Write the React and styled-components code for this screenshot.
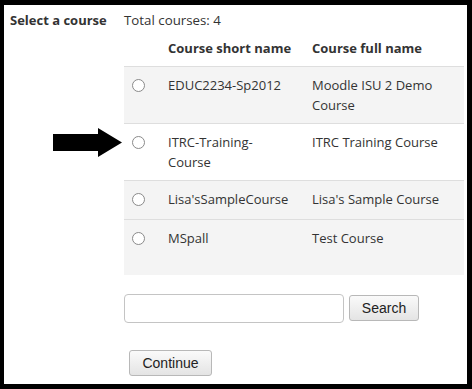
import React, { useState } from 'react'
import styled, { createGlobalStyle } from 'styled-components'

const courses = [
  { id: 1, short: 'EDUC2234-Sp2012', full: 'Moodle ISU 2 Demo Course', shade: true },
  { id: 2, short: 'ITRC-Training-Course', full: 'ITRC Training Course', shade: false },
  { id: 3, short: "Lisa'sSampleCourse", full: "Lisa's Sample Course", shade: true },
  { id: 4, short: 'MSpall', full: 'Test Course', shade: true, tall: true },
]

const App = () => {
  const [selected, setSelected] = useState(null)
  const [query, setQuery] = useState('')

  return (
    <>
      <Global />
      <Frame>
        <Arrow width="70" height="30" viewBox="0 0 70 30">
          <path d="M0 6 H45 V0 L69 14.5 L45 29 V23 H0 Z" fill="#000" />
        </Arrow>
        <Layout>
          <SideLabel>Select a course</SideLabel>
          <Main>
            <Caption>Total courses: 4</Caption>
            <Table>
              <thead>
                <tr>
                  <Th />
                  <Th>Course short name</Th>
                  <Th>Course full name</Th>
                </tr>
              </thead>
              <tbody>
                {courses.map((c) => (
                  <Row key={c.id} $shade={c.shade} $tall={c.tall}>
                    <RadioCell>
                      <Radio
                        type="radio"
                        name="course"
                        checked={selected === c.id}
                        onChange={() => setSelected(c.id)}
                      />
                    </RadioCell>
                    <ShortCell>{c.short}</ShortCell>
                    <Td>{c.full}</Td>
                  </Row>
                ))}
              </tbody>
            </Table>
            <SearchRow>
              <SearchInput value={query} onChange={(e) => setQuery(e.target.value)} />
              <Button $w={70}>Search</Button>
            </SearchRow>
            <ContinueRow>
              <Button $w={83}>Continue</Button>
            </ContinueRow>
          </Main>
        </Layout>
      </Frame>
    </>
  )
}

export default App

const Global = createGlobalStyle`
  body {
    margin: 0;
    background: #fff;
  }
`

const Frame = styled.div`
  position: relative;
  box-sizing: border-box;
  width: 472px;
  height: 389px;
  border-style: solid;
  border-color: #000;
  border-width: 5px 5px 5px 4px;
  background: #fff;
  padding-top: 5px;
  font-family: "Open Sans", "Noto Sans", sans-serif;
  font-size: 13px;
  color: #333;
  overflow: hidden;
`

const Arrow = styled.svg`
  position: absolute;
  left: 49px;
  top: 123px;
`

const Layout = styled.div`
  display: grid;
  grid-template-columns: 120px 340px;
`

const SideLabel = styled.div`
  padding-left: 6px;
  line-height: 20px;
  font-weight: bold;
  white-space: nowrap;
`

const Main = styled.div`
  display: flex;
  flex-direction: column;
`

const Caption = styled.div`
  line-height: 20px;
  font-size: 13.3px;
`

const Table = styled.table`
  width: 340px;
  border-collapse: collapse;
  table-layout: fixed;
`

const Th = styled.th`
  text-align: left;
  font-weight: bold;
  line-height: 20px;
  padding: 8px 0;
  white-space: nowrap;
  &:first-child { width: 44px; }
  &:nth-child(2) { width: 144px; }
`

const Row = styled.tr`
  background: ${(p) => (p.$shade ? '#f4f4f4' : '#fff')};
  border-top: 1px solid #dedede;
  height: ${(p) => (p.$tall ? '55px' : 'auto')};
`

const Td = styled.td`
  vertical-align: top;
  line-height: 20px;
  padding: 8px 0;
`

const RadioCell = styled(Td)`
  padding-left: 8px;
`

const ShortCell = styled(Td)`
  padding-right: 18px;
`

const Radio = styled.input`
  appearance: none;
  margin: 4px 0 0 0;
  width: 13px;
  height: 13px;
  border: 1px solid #8a8a8a;
  border-radius: 50%;
  background: #fff;
  box-sizing: border-box;
  &:checked {
    background: radial-gradient(circle, #333 35%, #fff 40%);
  }
`

const SearchRow = styled.div`
  display: flex;
  align-items: center;
  gap: 5px;
  margin-top: 19px;
`

const SearchInput = styled.input`
  box-sizing: border-box;
  width: 220px;
  height: 29px;
  border: 1px solid #c4c4c4;
  border-radius: 4px;
  padding: 4px 6px;
  font-size: 13px;
`

const ContinueRow = styled.div`
  display: flex;
  margin-top: 27px;
  padding-left: 5px;
`

const Button = styled.button`
  box-sizing: border-box;
  width: ${(p) => p.$w}px;
  height: 26px;
  border: 1px solid #b8b8b8;
  border-radius: 3px;
  background: linear-gradient(#fafafa, #e4e4e4);
  font-family: "Liberation Sans", Arial, sans-serif;
  font-size: 14px;
  color: #222;
  padding: 0;
  cursor: pointer;
`
